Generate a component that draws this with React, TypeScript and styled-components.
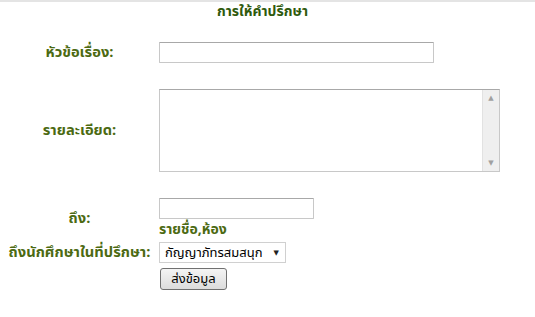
import * as React from 'react'
import styled, { createGlobalStyle } from 'styled-components'

const GlobalStyle = createGlobalStyle`
  body {
    margin: 0;
    background: #ffffff;
    font-family: Tahoma, "Noto Sans Thai", "Noto Sans", "DejaVu Sans", sans-serif;
    font-size: 13px;
  }
`

const Page = styled.div`
  border-top: 2px solid #e4e4e4;
  padding: 0 8px;
  height: 315px;
`

const Title = styled.div`
  text-align: center;
  color: #2f5a0c;
  font-weight: bold;
  font-size: 14px;
  line-height: 20px;
  padding: 0 10px 0 0;
`

const Form = styled.form`
  display: flex;
  flex-direction: column;
`

const Row = styled.div<{ $top: number }>`
  display: flex;
  align-items: center;
  margin-top: ${p => p.$top}px;
`

const Label = styled.label`
  width: 143px;
  flex: none;
  text-align: center;
  color: #4c6a12;
  font-weight: bold;
  font-size: 14.7px;
  line-height: 18px;
  margin-right: 8px;
  white-space: nowrap;
`

const Field = styled.div`
  display: flex;
  flex-direction: column;
  align-items: flex-start;
`

const TextInput = styled.input<{ $w: number }>`
  box-sizing: border-box;
  width: ${p => p.$w}px;
  height: 21px;
  margin: 0;
  border: 1px solid #c8c8c8;
  border-top-color: #a8a8a8;
  border-radius: 1px;
  font: inherit;
`

const Area = styled.div`
  box-sizing: border-box;
  width: 341px;
  height: 83px;
  border: 1px solid #c8c8c8;
  border-top-color: #a8a8a8;
  display: flex;
  justify-content: flex-end;
`

const ScrollBar = styled.div`
  width: 16px;
  background: #efefef;
  border-left: 1px solid #e2e2e2;
  display: flex;
  flex-direction: column;
  justify-content: space-between;
  align-items: center;
  padding: 4px 0;
  color: #a0a0a0;
  font-size: 7px;
  line-height: 8px;
`

const Hint = styled.div`
  color: #4c6a12;
  font-weight: bold;
  font-size: 14px;
  line-height: 18px;
  margin-top: 2px;
`

const Select = styled.div`
  box-sizing: border-box;
  width: 127px;
  height: 21px;
  border: 1px solid #d0d0d0;
  display: flex;
  align-items: center;
  justify-content: space-between;
  padding: 0 6px 0 5px;
  color: #000;
  font-size: 13px;
`

const Arrow = styled.span`
  font-size: 7px;
  color: #222;
`

const Button = styled.button`
  box-sizing: border-box;
  width: 67px;
  height: 22px;
  margin-left: 1px;
  border: 1px solid #707070;
  border-radius: 3px;
  background: linear-gradient(#f4f4f4, #dcdcdc);
  font: inherit;
  font-size: 13px;
  color: #000;
  padding: 0;
`

export default function App() {
  return (
    <>
      <GlobalStyle />
      <Page>
        <Title>การให้คำปรึกษา</Title>
        <Form onSubmit={e => e.preventDefault()}>
          <Row $top={20}>
            <Label>หัวข้อเรื่อง:</Label>
            <TextInput $w={275} />
          </Row>
          <Row $top={26}>
            <Label>รายละเอียด:</Label>
            <Area>
              <ScrollBar>
                <span>▲</span>
                <span>▼</span>
              </ScrollBar>
            </Area>
          </Row>
          <Row $top={26}>
            <Label>ถึง:</Label>
            <Field>
              <TextInput $w={155} />
              <Hint>รายชื่อ,ห้อง</Hint>
            </Field>
          </Row>
          <Row $top={3}>
            <Label>ถึงนักศึกษาในที่ปรึกษา:</Label>
            <Select>
              <span>กัญญาภัทรสมสนุก</span>
              <Arrow>▼</Arrow>
            </Select>
          </Row>
          <Row $top={5}>
            <Label />
            <Button type="submit">ส่งข้อมูล</Button>
          </Row>
        </Form>
      </Page>
    </>
  )
}
